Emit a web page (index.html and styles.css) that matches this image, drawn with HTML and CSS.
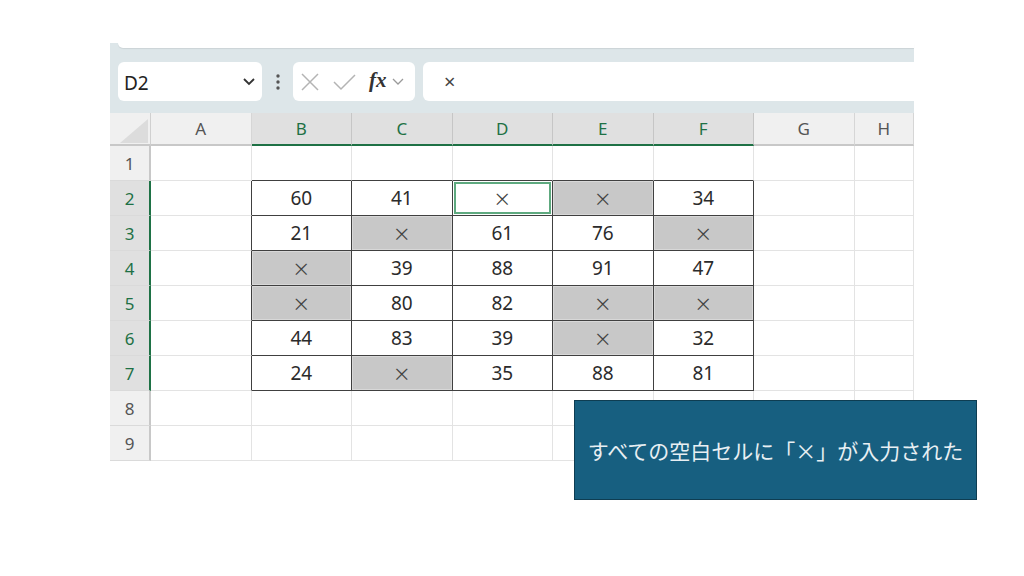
FILE: index.html
```html
<!DOCTYPE html>
<html lang="ja">

<head>
    <meta charset="UTF-8">
    <title>空白セルに×を入力</title>
    <link rel="stylesheet" href="styles.css">
</head>

<body>
    <div class="excel">
        <!-- Ribbon edge + formula bar -->
        <div class="ribbon-edge"></div>
        <div class="formula-bar">
            <div class="name-box">
                <span>D2</span>
                <svg width="14" height="10" viewBox="0 0 14 10"><polyline points="2,2 7,7 12,2" fill="none" stroke="#333" stroke-width="1.8"/></svg>
            </div>
            <div class="dots">
                <svg width="4" height="16" viewBox="0 0 4 16"><circle cx="2" cy="2" r="1.7" fill="#555"/><circle cx="2" cy="8" r="1.7" fill="#555"/><circle cx="2" cy="14" r="1.7" fill="#555"/></svg>
            </div>
            <div class="func-box">
                <svg class="ico-x" width="20" height="20" viewBox="0 0 20 20"><path d="M2 2 L18 18 M18 2 L2 18" stroke="#b4b4b4" stroke-width="1.5" fill="none"/></svg>
                <svg class="ico-check" width="24" height="20" viewBox="0 0 24 20"><polyline points="1,10 8,17 22,3" fill="none" stroke="#b4b4b4" stroke-width="1.5"/></svg>
                <span class="fx">fx</span>
                <svg class="ico-down" width="12" height="8" viewBox="0 0 12 8"><polyline points="1,1 6,6 11,1" fill="none" stroke="#9a9a9a" stroke-width="1.3"/></svg>
            </div>
            <div class="formula-input">×</div>
        </div>

        <!-- Sheet grid -->
        <div class="sheet">
            <div class="corner"><span class="tri"></span></div>
            <div class="hd">A</div>
            <div class="hd sel">B</div>
            <div class="hd sel">C</div>
            <div class="hd sel">D</div>
            <div class="hd sel">E</div>
            <div class="hd sel">F</div>
            <div class="hd">G</div>
            <div class="hd">H</div>

            <!-- row 1 -->
            <div class="rh">1</div>
            <div class="c"></div>
            <div class="c above"></div>
            <div class="c above"></div>
            <div class="c above"></div>
            <div class="c above"></div>
            <div class="c above"></div>
            <div class="c"></div>
            <div class="c"></div>

            <!-- row 2 -->
            <div class="rh sel">2</div>
            <div class="c left-of"></div>
            <div class="t">60</div>
            <div class="t">41</div>
            <div class="t active">×</div>
            <div class="t x">×</div>
            <div class="t">34</div>
            <div class="c"></div>
            <div class="c"></div>

            <!-- row 3 -->
            <div class="rh sel">3</div>
            <div class="c left-of"></div>
            <div class="t">21</div>
            <div class="t x">×</div>
            <div class="t">61</div>
            <div class="t">76</div>
            <div class="t x">×</div>
            <div class="c"></div>
            <div class="c"></div>

            <!-- row 4 -->
            <div class="rh sel">4</div>
            <div class="c left-of"></div>
            <div class="t x">×</div>
            <div class="t">39</div>
            <div class="t">88</div>
            <div class="t">91</div>
            <div class="t">47</div>
            <div class="c"></div>
            <div class="c"></div>

            <!-- row 5 -->
            <div class="rh sel">5</div>
            <div class="c left-of"></div>
            <div class="t x">×</div>
            <div class="t">80</div>
            <div class="t">82</div>
            <div class="t x">×</div>
            <div class="t x">×</div>
            <div class="c"></div>
            <div class="c"></div>

            <!-- row 6 -->
            <div class="rh sel">6</div>
            <div class="c left-of"></div>
            <div class="t">44</div>
            <div class="t">83</div>
            <div class="t">39</div>
            <div class="t x">×</div>
            <div class="t">32</div>
            <div class="c"></div>
            <div class="c"></div>

            <!-- row 7 -->
            <div class="rh sel">7</div>
            <div class="c left-of"></div>
            <div class="t">24</div>
            <div class="t x">×</div>
            <div class="t">35</div>
            <div class="t">88</div>
            <div class="t">81</div>
            <div class="c"></div>
            <div class="c"></div>

            <!-- row 8 -->
            <div class="rh">8</div>
            <div class="c"></div>
            <div class="c"></div>
            <div class="c"></div>
            <div class="c"></div>
            <div class="c"></div>
            <div class="c"></div>
            <div class="c"></div>
            <div class="c"></div>

            <!-- row 9 -->
            <div class="rh">9</div>
            <div class="c"></div>
            <div class="c"></div>
            <div class="c"></div>
            <div class="c"></div>
            <div class="c"></div>
            <div class="c"></div>
            <div class="c"></div>
            <div class="c"></div>
        </div>
    </div>

    <!-- Callout -->
    <div class="callout">すべての空白セルに「×」が入力された</div>
</body>

</html>
```

FILE: styles.css
```css
/* Page */
body {
    margin: 0;
    background: #fff;
    font-family: "Noto Sans", "Noto Sans CJK JP", sans-serif;
    color: #2b2b2b;
    width: 1024px;
    height: 576px;
    position: relative;
    overflow: hidden;
}

.excel {
    margin: 43px 0 0 110px;
    width: 804px;
    background: #dde6e9;
}

/* bottom of the ribbon panel */
.ribbon-edge {
    height: 5px;
    margin-left: 8px;
    background: #fff;
    border-bottom-left-radius: 8px;
    box-shadow: 0 1px 1px rgba(0, 0, 0, 0.08);
}

.formula-bar {
    display: flex;
    align-items: center;
    padding: 14px 0 12px 8px;
}

.name-box {
    width: 144px;
    height: 39px;
    box-sizing: border-box;
    background: #fff;
    border-radius: 6px;
    display: flex;
    align-items: center;
    justify-content: space-between;
    padding: 0 6px 0 6px;
    font-size: 19px;
    color: #222;
}

.name-box span {
    padding-top: 2px;
}

.dots {
    width: 31px;
    display: flex;
    justify-content: center;
}

.func-box {
    width: 122px;
    height: 39px;
    box-sizing: border-box;
    background: #fff;
    border-radius: 6px;
    margin-right: 8px;
    display: flex;
    align-items: center;
    padding-left: 7px;
}

.ico-check {
    margin-left: 13px;
}

.fx {
    font-family: "Liberation Serif", serif;
    font-style: italic;
    font-weight: bold;
    font-size: 21px;
    color: #333;
    margin-left: 12px;
    margin-top: -2px;
}

.ico-down {
    margin-left: 5px;
}

.formula-input {
    flex: 1;
    height: 39px;
    background: #fff;
    border-radius: 6px 0 0 6px;
    display: flex;
    align-items: center;
    padding-left: 21px;
    font-size: 20px;
    color: #444;
}

/* Grid */
.sheet {
    display: grid;
    grid-template-columns: 41px repeat(7, 100.5px) 1fr;
    grid-template-rows: 33px repeat(9, 35px);
    background: #fff;
}

.sheet > div {
    box-sizing: border-box;
    display: flex;
    align-items: center;
    justify-content: center;
}

.corner {
    background: #f0f0f0;
    border-right: 1px solid #d0d0d0;
    border-bottom: 2px solid #c8c8c8;
    position: relative;
}

.corner .tri {
    position: absolute;
    left: 10px;
    top: 6px;
    width: 28px;
    height: 24px;
    background: #dcdcdc;
    clip-path: polygon(100% 0, 100% 100%, 0 100%);
}

.hd {
    background: #f0f0f0;
    border-right: 1px solid #d6d6d6;
    border-bottom: 2px solid #c8c8c8;
    font-size: 17px;
    color: #555;
}

.hd.sel {
    background: #e0e0e0;
    color: #1e7145;
    border-bottom: 2px solid #1e7145;
    border-right-color: #c6c6c6;
}

.rh {
    background: #f0f0f0;
    border-right: 2px solid #c8c8c8;
    border-bottom: 1px solid #dadada;
    font-size: 17px;
    color: #555;
}

.rh.sel {
    background: #e0e0e0;
    color: #1e7145;
    border-right: 2px solid #1e7145;
}

.c {
    border-right: 1px solid #e3e3e3;
    border-bottom: 1px solid #e3e3e3;
}

.c.above {
    border-bottom-color: #404040;
}

.c.left-of {
    border-right-color: #404040;
}

.t {
    border-right: 1px solid #404040;
    border-bottom: 1px solid #404040;
    font-size: 19px;
    color: #2b2b2b;
}

.t.x {
    background: #c8c8c8;
    box-shadow: inset 0 0 0 1px #d8d8d8;
    font-family: "Noto Sans CJK JP", sans-serif;
    font-size: 18px;
    color: #444;
}

.t.active {
    box-shadow: inset 0 0 0 1px #fff, inset 0 0 0 3px #5ea97f;
    font-family: "Noto Sans CJK JP", sans-serif;
    font-size: 18px;
    color: #444;
}

/* Callout over the sheet */
.callout {
    position: absolute;
    left: 574px;
    top: 400px;
    width: 403px;
    height: 100px;
    box-sizing: border-box;
    background: #175f80;
    border: 1px solid #0e3d52;
    display: flex;
    align-items: center;
    justify-content: center;
    font-family: "Noto Sans CJK JP", sans-serif;
    font-size: 21px;
    color: #e8eff3;
}
```
